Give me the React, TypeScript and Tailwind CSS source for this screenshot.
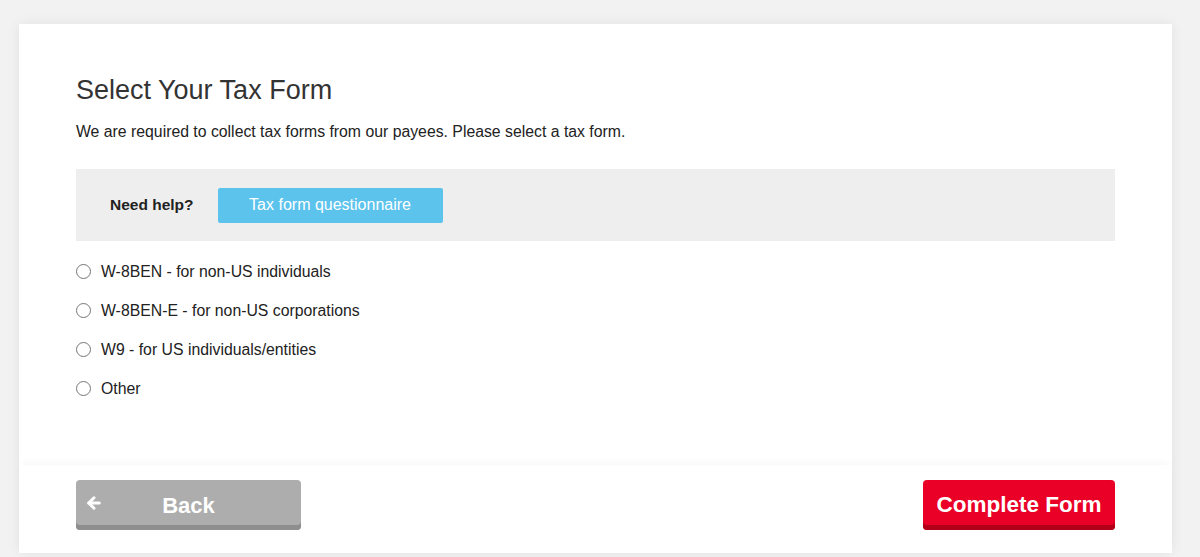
import { ArrowLeft } from 'lucide-react'

const TAX_FORMS = [
  'W-8BEN - for non-US individuals',
  'W-8BEN-E - for non-US corporations',
  'W9 - for US individuals/entities',
  'Other',
]

function RadioOption({ label }: { label: string }) {
  return (
    <label className="flex h-[39px] cursor-pointer items-center gap-[10px] text-[15.8px] text-[#222]">
      <input type="radio" name="taxForm" className="peer sr-only" />
      <span className="h-[15px] w-[15px] shrink-0 rounded-full border border-[#767676] bg-white" />
      {label}
    </label>
  )
}

export default function App() {
  return (
    <div
      className="min-h-screen bg-[#f2f2f2] pb-[4px] pl-[19px] pr-[28px] pt-[24px]"
      style={{ fontFamily: '"Liberation Sans", Arial, Helvetica, sans-serif' }}
    >
      <div className="flex h-[529px] flex-col bg-white shadow-[0_0_12px_rgba(0,0,0,0.07)]">
        <div className="flex-1 px-[57px] pt-[50px]">
          <h1 className="text-[27px] leading-[32px] text-[#333]">
            Select Your Tax Form
          </h1>
          <p className="mt-[16px] text-[15.8px] leading-[20px] text-[#222]">
            We are required to collect tax forms from our payees. Please select
            a tax form.
          </p>

          <div className="mt-[27px] flex h-[72px] items-center gap-[24px] bg-[#eeeeee] pl-[34px]">
            <span className="text-[15.5px] font-bold text-[#222]">Need help?</span>
            <button className="h-[35px] w-[225px] rounded-[2px] bg-[#5cc3ed] text-[16px] text-white">
              Tax form questionnaire
            </button>
          </div>

          <div className="mt-[11px] flex flex-col">
            {TAX_FORMS.map((form) => (
              <RadioOption key={form} label={form} />
            ))}
          </div>
        </div>

        <div className="flex h-[88px] items-start justify-between px-[57px] pt-[15px] shadow-[0_-5px_8px_-3px_rgba(0,0,0,0.035)]">
          <button className="relative flex h-[50px] w-[225px] items-center justify-center rounded-[4px] bg-[#adadad] text-[22px] font-bold text-white shadow-[inset_0_-5px_0_#8e8e8e]">
            <ArrowLeft
              className="absolute left-[9px] top-[14px] h-[18px] w-[18px]"
              strokeWidth={4}
              aria-hidden="true"
            />
            Back
          </button>
          <button className="flex h-[50px] w-[192px] items-center justify-center rounded-[4px] bg-[#ea0026] text-[22.5px] font-bold text-white shadow-[inset_0_-5px_0_#b20018]">
            Complete Form
          </button>
        </div>
      </div>
    </div>
  )
}
